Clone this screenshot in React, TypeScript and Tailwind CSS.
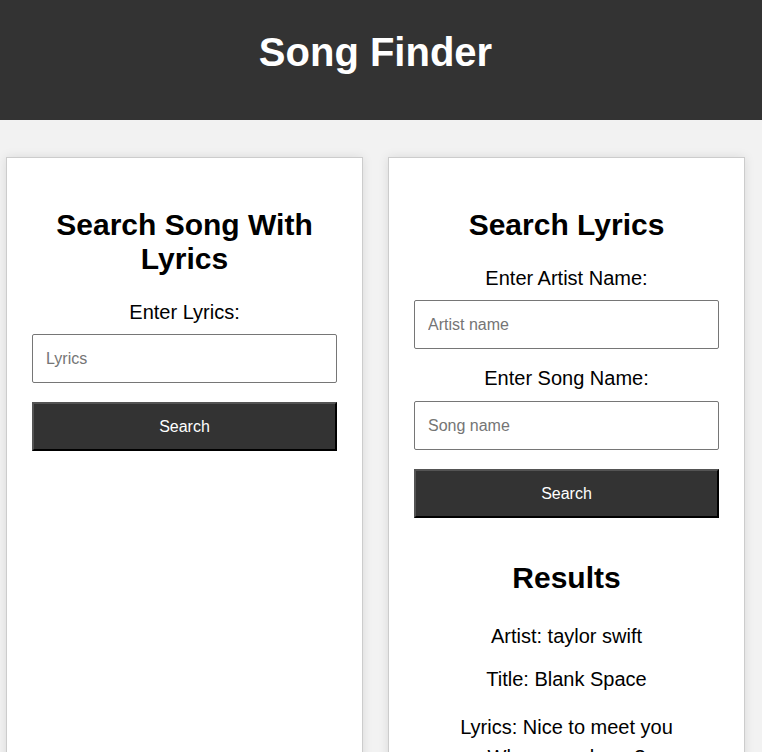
import React from "react";

const font = { fontFamily: '"Liberation Sans", Arial, sans-serif' };

function Field({ placeholder, className }: { placeholder: string; className: string }) {
  return (
    <input
      type="text"
      placeholder={placeholder}
      className={`block w-full h-[49px] border border-[#767676] rounded-[2px] bg-white px-[13px] text-[16px] text-black placeholder:text-[#757575] outline-none ${className}`}
    />
  );
}

function SearchButton({ className }: { className: string }) {
  return (
    <button
      className={`block w-full h-[49px] bg-[#333333] text-white text-[16px] border-2 border-t-[#545454] border-l-[#545454] border-r-black border-b-black ${className}`}
    >
      Search
    </button>
  );
}

export default function App() {
  return (
    <div className="min-h-screen bg-[#f2f2f2] text-black" style={font}>
      <header className="h-[120px] bg-[#333333] pt-[29px] pr-[11px]">
        <h1 className="text-center text-white text-[40px] font-bold leading-[46px]">Song Finder</h1>
      </header>
      <main className="flex gap-[25px] pl-[6px] pt-[37px] pb-[40px]">
        <section className="w-[357px] bg-white border border-[#cccccc] shadow-[0_0_10px_rgba(0,0,0,0.1)] px-[25px] pt-[50px]">
          <h2 className="text-center text-[30px] font-bold leading-[34px]">Search Song With Lyrics</h2>
          <p className="text-center text-[20px] leading-[23px] mt-[25px]">Enter Lyrics:</p>
          <Field placeholder="Lyrics" className="mt-[10px]" />
          <SearchButton className="mt-[19px]" />
        </section>
        <section className="w-[357px] bg-white border border-[#cccccc] shadow-[0_0_10px_rgba(0,0,0,0.1)] px-[25px] pt-[50px] pb-[30px]">
          <h2 className="text-center text-[30px] font-bold leading-[34px]">Search Lyrics</h2>
          <p className="text-center text-[20px] leading-[23px] mt-[25px]">Enter Artist Name:</p>
          <Field placeholder="Artist name" className="mt-[10px]" />
          <p className="text-center text-[20px] leading-[23px] mt-[18px]">Enter Song Name:</p>
          <Field placeholder="Song name" className="mt-[11px]" />
          <SearchButton className="mt-[19px]" />
          <h2 className="text-center text-[30px] font-bold leading-[34px] mt-[43px]">Results</h2>
          <p className="text-center text-[20px] leading-[23px] mt-[30px]">Artist: taylor swift</p>
          <p className="text-center text-[20px] leading-[23px] mt-[20px]">Title: Blank Space</p>
          <p className="text-center text-[20px] leading-[30px] mt-[21px]">
            Lyrics: Nice to meet you
            <br />
            Where you been?
            <br />
            I could show you incredible things
          </p>
        </section>
      </main>
    </div>
  );
}
